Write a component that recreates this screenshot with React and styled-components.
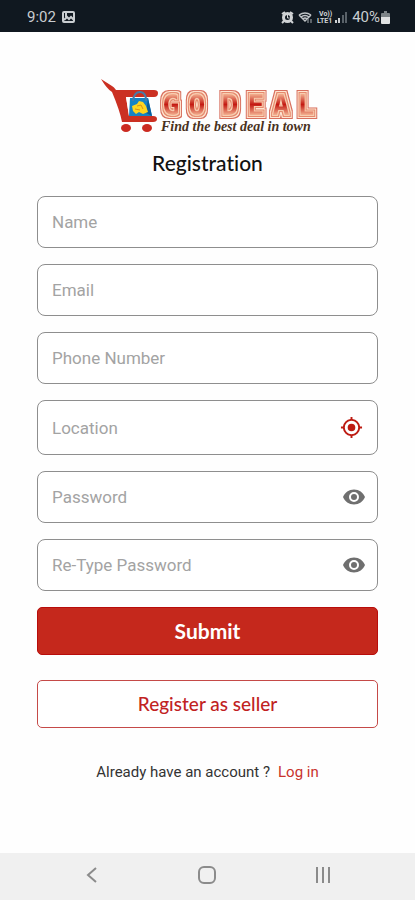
import React, { useState } from "react";
import styled, { createGlobalStyle, css } from "styled-components";

const GlobalStyle = createGlobalStyle`
  * { box-sizing: border-box; }
  body { margin: 0; background: #fefefe; font-family: Roboto, sans-serif; }
`;

const RED = "#c5281c";

const Screen = styled.div`
  min-height: 100vh;
  display: flex;
  flex-direction: column;
`;

const StatusBar = styled.header`
  height: 32px;
  padding: 2px 25px 0 27px;
  display: flex;
  align-items: center;
  justify-content: space-between;
  background: #101820;
  color: #c9cdd0;
  font-size: 15px;
`;

const StatusGroup = styled.div`
  display: flex;
  align-items: center;
  gap: ${(p) => p.$gap}px;
  svg { display: block; }
`;

const Main = styled.main`
  flex: 1;
  padding: 43px 37px 0;
  display: flex;
  flex-direction: column;
  align-items: center;
`;

const Title = styled.h1`
  margin: 16px 0 21px;
  font: 500 21px/24px Lato, sans-serif;
  font-variant-ligatures: none;
  color: #111;
`;

const Form = styled.form`
  width: 100%;
  display: flex;
  flex-direction: column;
  gap: 16px;
`;

const Field = styled.div`
  height: ${(p) => (p.$tall ? 55 : 52)}px;
  display: flex;
  align-items: center;
  border: 1px solid #8e8e8e;
  border-radius: 8px;
  padding-right: ${(p) => (p.$tall ? 14 : 11)}px;
  background: #fff;
`;

const Input = styled.input`
  flex: 1;
  min-width: 0;
  height: 100%;
  padding: 0 14px;
  border: 0;
  outline: 0;
  background: transparent;
  font: 400 17px/20px Roboto, sans-serif;
  color: #333;
  &::placeholder { color: #a3a3a3; opacity: 1; }
`;

const IconButton = styled.button`
  display: flex;
  padding: 0;
  border: 0;
  background: none;
  color: ${(p) => p.$color};
  cursor: pointer;
`;

const Button = styled.button`
  height: 48px;
  border-radius: 5px;
  cursor: pointer;
  ${(p) =>
    p.$outline
      ? css`
          margin-top: 9px;
          border: 1px solid #c54a48;
          background: #fff;
          color: #c1221f;
          font: 500 19px/24px Lato, sans-serif;
        `
      : css`
          border: 1px solid #b80d0b;
          background: ${RED};
          color: #fff;
          font: 700 21px/24px Lato, sans-serif;
        `}
`;

const Prompt = styled.p`
  margin: 34px 0 20px;
  display: flex;
  gap: 8px;
  font-size: 15px;
  line-height: 20px;
  color: #333;
`;

const Link = styled.a`
  color: #c9332c;
  text-decoration: none;
`;

const NavBar = styled.nav`
  height: 47px;
  padding: 0 34px 3px;
  display: grid;
  grid-template-columns: repeat(3, 1fr);
  place-items: center;
  background: #f0f0f0;
`;

const Logo = () => (
  <svg width="224" height="60" viewBox="0 0 224 60" role="img" aria-label="Go Deal">
    <defs>
      <linearGradient id="face" gradientUnits="userSpaceOnUse" x1="0" y1="17" x2="0" y2="42">
        <stop offset="0.1" stopColor="#f0a98a" />
        <stop offset="0.5" stopColor="#c41a12" />
        <stop offset="0.9" stopColor="#f0a98a" />
      </linearGradient>
      <filter id="outline" filterUnits="userSpaceOnUse" x="55" y="5" width="169" height="50" colorInterpolationFilters="sRGB">
        <feMorphology in="SourceAlpha" operator="dilate" radius="4" result="outer" />
        <feFlood floodColor="#d8705f" />
        <feComposite in2="outer" operator="in" result="rim" />
        <feMorphology in="SourceAlpha" operator="dilate" radius="3" result="middle" />
        <feFlood floodColor="#ffe6d2" />
        <feComposite in2="middle" operator="in" result="cream" />
        <feMorphology in="SourceAlpha" operator="dilate" radius="2" result="inner" />
        <feFlood floodColor="#e58a6e" />
        <feComposite in2="inner" operator="in" result="edge" />
        <feMorphology in="SourceAlpha" operator="dilate" radius="1" result="near" />
        <feFlood floodColor="#f8cdb0" />
        <feComposite in2="near" operator="in" result="glow" />
        <feMerge>
          <feMergeNode in="rim" />
          <feMergeNode in="cream" />
          <feMergeNode in="edge" />
          <feMergeNode in="glow" />
          <feMergeNode in="SourceGraphic" />
        </feMerge>
      </filter>
    </defs>
    <path
      d="M5 4 L16 11 Q18 12 20 15 H58 Q62 15 62 18 Q62 22 58 22 H30 L33 41 H57 Q61 41 61 44 Q61 47 57 47 H26 Q24 36 16 17 Q11 14 5 4Z"
      fill="#cb3022"
    />
    <path d="M30 22 H57 V41 H33Z" fill="#fff" />
    <path d="M34 23 H52 L56 41 H33Z" fill="#1683c5" />
    <path d="M52 23 L56 41 L50 38Z" fill="#0a5d9b" />
    <path d="M37 26 Q38 17 44 17 Q50 17 50 26" fill="none" stroke="#487ba8" strokeWidth="2" />
    <path d="M36 31 L41 29 L43 26 L47 27 L50 31 L52 37 L47 39 L43 37 L40 39 L37 36Z" fill="#ffd51f" />
    <path d="M41 31 L45 30 L47 34 M39 34 L44 35" fill="none" stroke="#d79118" />
    <ellipse cx="30" cy="53" rx="5" ry="4" fill="#cb2a20" />
    <ellipse cx="51" cy="53" rx="5" ry="4" fill="#cb2a20" />
    <text
      x="75 101 134 160 185 210"
      y="40"
      textAnchor="middle"
      fontFamily="'DejaVu Sans Mono', monospace"
      fontWeight="700"
      fontSize="28"
      fill="url(#face)"
      filter="url(#outline)"
    >
      GODEAL
    </text>
    <text
      x="65"
      y="56"
      fontFamily="'Liberation Serif', serif"
      fontStyle="italic"
      fontWeight="700"
      fontSize="14"
      fill="#49321d"
    >
      Find the best deal in town
    </text>
  </svg>
);

const PictureIcon = () => (
  <svg width="13" height="12" viewBox="0 0 13 12" fill="none" stroke="#c9cdd0" strokeWidth="2">
    <rect x="1" y="1" width="11" height="10" rx="1" />
    <path d="M4 2v4M2 9l3-3 2 2 2-2 3 3" />
  </svg>
);

const AlarmIcon = () => (
  <svg width="13" height="13" viewBox="0 0 13 13" fill="none" stroke="#d0d3d5">
    <circle cx="6.5" cy="6.5" r="4" strokeWidth="3" />
    <path d="M1 3l3-2M9 1l3 2M3 10l-2 2M10 10l2 2" strokeWidth="2" />
    <path d="M6.5 4v3h2" />
  </svg>
);

const WifiIcon = () => (
  <svg width="15" height="13" viewBox="0 0 15 13" fill="none" stroke="#bfc3c6" strokeWidth="1.5">
    <path d="M1 4Q7 0 13 4M3 6q4-3 8 0M5 8q2-2 4 0M1 4l6 6 6-6" />
    <path d="M10 8v4M13 8v4" stroke="#747b80" />
  </svg>
);

const SignalIcon = () => (
  <svg width="31" height="14" viewBox="0 0 31 14" fill="#d0d3d5">
    <text x="2" y="6" fontFamily="Roboto, sans-serif" fontSize="7" fontWeight="700">Vo))</text>
    <text x="0" y="13" fontFamily="Roboto, sans-serif" fontSize="7" fontWeight="700">LTE1</text>
    <path d="M18 10h2v3h-2zM21 8h2v5h-2z" />
    <path d="M25 5h2v8h-2zM28 2h2v11h-2z" fill="#596168" />
  </svg>
);

const BatteryIcon = () => (
  <svg width="9" height="13" viewBox="0 0 9 13">
    <path d="M3 0h3v2h2q1 0 1 1v3H0V3q0-1 1-1h2z" fill="#7d8488" />
    <path d="M0 6h9v6q0 1-1 1H1q-1 0-1-1z" fill="#e0e2e3" />
  </svg>
);

const LocateIcon = () => (
  <svg width="23" height="23" viewBox="0 0 24 24" fill="currentColor">
    <path d="M12 8a4 4 0 1 0 0 8 4 4 0 0 0 0-8zm8.94 3A9 9 0 0 0 13 3.06V1h-2v2.06A9 9 0 0 0 3.06 11H1v2h2.06A9 9 0 0 0 11 20.94V23h2v-2.06A9 9 0 0 0 20.94 13H23v-2h-2.06zM12 19a7 7 0 1 1 0-14 7 7 0 0 1 0 14z" />
  </svg>
);

const EyeIcon = () => (
  <svg width="24" height="24" viewBox="0 0 24 24" fill="currentColor">
    <path d="M12 4.5C7 4.5 2.73 7.61 1 12c1.73 4.39 6 7.5 11 7.5s9.27-3.11 11-7.5c-1.73-4.39-6-7.5-11-7.5zM12 17a5 5 0 1 1 0-10 5 5 0 0 1 0 10zm0-8a3 3 0 1 0 0 6 3 3 0 0 0 0-6z" />
  </svg>
);

function PasswordField({ label }) {
  const [visible, setVisible] = useState(false);
  return (
    <Field>
      <Input type={visible ? "text" : "password"} aria-label={label} placeholder={label} />
      <IconButton
        type="button"
        $color="#6f6f6f"
        aria-label={`Show ${label}`}
        aria-pressed={visible}
        onClick={() => setVisible(!visible)}
      >
        <EyeIcon />
      </IconButton>
    </Field>
  );
}

export default function App() {
  return (
    <Screen>
      <GlobalStyle />
      <StatusBar>
        <StatusGroup $gap={6}>
          <span>9:02</span>
          <PictureIcon />
        </StatusGroup>
        <StatusGroup $gap={4}>
          <AlarmIcon />
          <WifiIcon />
          <SignalIcon />
          <StatusGroup $gap={1}>
            <span>40%</span>
            <BatteryIcon />
          </StatusGroup>
        </StatusGroup>
      </StatusBar>
      <Main>
        <Logo />
        <Title>Registration</Title>
        <Form onSubmit={(e) => e.preventDefault()}>
          <Field><Input type="text" aria-label="Name" placeholder="Name" /></Field>
          <Field><Input type="email" aria-label="Email" placeholder="Email" /></Field>
          <Field><Input type="tel" aria-label="Phone Number" placeholder="Phone Number" /></Field>
          <Field $tall>
            <Input type="text" aria-label="Location" placeholder="Location" />
            <IconButton type="button" $color="#bd1b12" aria-label="Use current location">
              <LocateIcon />
            </IconButton>
          </Field>
          <PasswordField label="Password" />
          <PasswordField label="Re-Type Password" />
          <Button type="submit">Submit</Button>
          <Button type="button" $outline>Register as seller</Button>
        </Form>
        <Prompt>
          <span>Already have an account ?</span>
          <Link href="#login">Log in</Link>
        </Prompt>
      </Main>
      <NavBar aria-label="System">
        <IconButton $color="#8b8b8b" aria-label="Back">
          <svg width="18" height="18" viewBox="0 0 18 18" fill="none" stroke="currentColor" strokeWidth="2">
            <path d="M13 2L5 9l8 7" />
          </svg>
        </IconButton>
        <IconButton $color="#8b8b8b" aria-label="Home">
          <svg width="18" height="18" viewBox="0 0 18 18" fill="none" stroke="currentColor" strokeWidth="2">
            <rect x="1" y="1" width="16" height="16" rx="5" />
          </svg>
        </IconButton>
        <IconButton $color="#8b8b8b" aria-label="Recent apps">
          <svg width="18" height="18" viewBox="0 0 18 18" fill="none" stroke="currentColor" strokeWidth="2">
            <path d="M3 1v16M9 1v16M15 1v16" />
          </svg>
        </IconButton>
      </NavBar>
    </Screen>
  );
}
